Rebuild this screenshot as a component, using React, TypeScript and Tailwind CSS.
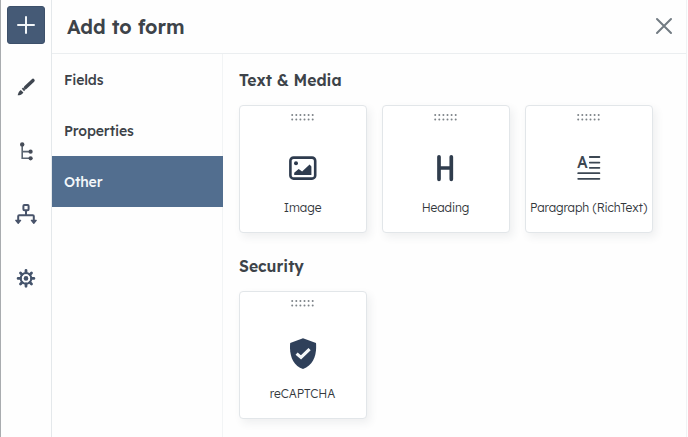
import React, { useState } from 'react';

const TABS = ['Fields', 'Properties', 'Other'];

const BrushIcon = () => (
    <svg className="w-5 h-5" viewBox="0 0 20 20" fill="none" stroke="#3f4650">
        <path d="M17 3.4 L9.5 10.6" strokeWidth="3.4" strokeLinecap="round" />
        <path d="M8.2 11.7 L6.9 13" strokeWidth="3.2" />
        <path d="M4.8 12.9 L7.4 15.4 C6.3 17.4 4 18.2 1.7 18.3 C2.1 16.1 3 13.9 4.8 12.9 Z" fill="#3f4650" stroke="none" />
    </svg>
);

const TreeIcon = () => (
    <svg className="w-5 h-5" viewBox="0 0 20 20" fill="none" stroke="#5a6470" strokeWidth="1.6">
        <path d="M6.2 3 V17.3 H14 M6.2 10.6 H14" />
        <g fill="#464c58" stroke="none">
            <circle cx="6.2" cy="3.4" r="2.2" />
            <circle cx="14.6" cy="10.7" r="2.1" />
            <circle cx="14.6" cy="17.3" r="2.1" />
        </g>
    </svg>
);

const FlowIcon = () => (
    <svg className="w-6 h-6" viewBox="0 0 24 24" fill="none" stroke="#48536a" strokeWidth="2">
        <rect x="9.4" y="3" width="5.2" height="5.2" rx="1" />
        <path d="M12 8.2 V13.2 M4.2 18 V14.2 Q4.2 13.2 5.2 13.2 H18.8 Q19.8 13.2 19.8 14.2 V18" />
        <path d="M1.8 18.3 H6.6 L4.2 21.3 Z M17.4 18.3 H22.2 L19.8 21.3 Z" fill="#48536a" strokeWidth="1.3" strokeLinejoin="round" />
    </svg>
);

const GearIcon = () => (
    <svg className="w-5 h-5" viewBox="0 0 20 20" fill="none" stroke="#44536b">
        <circle cx="10" cy="10.4" r="5.3" strokeWidth="2" />
        <circle cx="10" cy="10.4" r="2.3" fill="#44536b" stroke="none" />
        <path
            d="M10 4.8V2.5M10 16V18.3M4.4 10.4H2.1M15.6 10.4H17.9M6 6.4L4.5 4.9M14 14.4L15.5 15.9M6 14.4L4.5 15.9M14 6.4L15.5 4.9"
            strokeWidth="2.8"
            strokeLinecap="round"
        />
    </svg>
);

const ImageIcon = () => (
    <svg className="w-7 h-6" viewBox="0 0 28 24" fill="none">
        <rect x="1.4" y="1.6" width="24.8" height="21" rx="3.2" stroke="#2e3b4e" strokeWidth="2.6" />
        <circle cx="7" cy="7.2" r="2" fill="#2e3b4e" />
        <path d="M5.2 19 V16.8 L9.7 12.9 L13.1 15.4 L20.6 8.4 L22.4 10.4 V19 Z" fill="#2e3b4e" />
    </svg>
);

const HeadingIcon = () => (
    <svg className="w-8 h-8" viewBox="0 0 32 32" fill="none" stroke="#303d4d" strokeWidth="3.7" strokeLinecap="round">
        <path d="M9 4.8 V27.3 M21.3 4.8 V27.3 M9 16 H21.3" />
    </svg>
);

const ParagraphIcon = () => (
    <svg className="w-6 h-[26px] overflow-visible" viewBox="0 0 24 26" fill="none">
        <text x="0" y="13.4" fontSize="16.5" fontWeight="500" fill="#3c4753" textLength="10.8" lengthAdjust="spacingAndGlyphs">A</text>
        <path d="M12.8 2H22.4M12.8 7.6H22.4M12.8 12.8H22.4M1.2 18.2H22.4M1.2 23.8H22.4" stroke="#3c4753" strokeWidth="1.8" strokeLinecap="round" />
    </svg>
);

const ShieldIcon = () => (
    <svg className="w-[27px] h-8" viewBox="0 0 27 32">
        <path d="M13 .2 L26 5 C27 17 23.3 27.2 13 31 C2.7 27.2 -1 17 .2 5 Z" fill="#2f405a" />
        <path d="M6.6 15.6 L11 19.4 L19.6 11.2" fill="none" stroke="#f5f8fa" strokeWidth="3.2" />
    </svg>
);

const DragDots = () => (
    <svg className="w-6 h-2" viewBox="0 0 24 8" stroke="#7d8388" strokeWidth="2" strokeLinecap="round" strokeDasharray="0 4.1">
        <path d="M1.2 2H22.3M1.2 6.6H22.3" />
    </svg>
);

const Card: React.FC<{ label: string; children: React.ReactNode }> = ({ label, children }) => (
    <button className="w-32 h-32 shrink-0 flex flex-col items-center rounded-[4px] border border-[#e2e6e9] bg-white pt-[7px] shadow-[3px_4px_8px_rgba(45,62,80,0.08)]">
        <DragDots />
        <span className="h-[58px] mt-[18px] flex items-center justify-center">{children}</span>
        <span className="mt-px whitespace-nowrap text-[12px] leading-5 font-light tracking-[-0.08px] text-[#33383d] -ml-px">{label}</span>
    </button>
);

const App: React.FC = () => {
    const [tab, setTab] = useState('Other');

    return (
        <div className="w-[688px] h-[437px] flex overflow-hidden border-l border-[#a9acaf] bg-[#fefefe] font-['Lexend_Deca','Lexend','Inter',sans-serif] text-[#3d4349]">
            <nav className="w-[51px] shrink-0 flex flex-col items-center border-r border-[#e4e8eb] pt-1.5">
                <button className="w-[38px] h-[38px] flex items-center justify-center rounded-[3px] border border-[#3d506a] bg-[#455a76]">
                    <svg className="w-5 h-5" viewBox="0 0 20 20" stroke="#f3f7fa" strokeWidth="2" strokeLinecap="round">
                        <path d="M10 2V18M2 10H18" />
                    </svg>
                </button>
                <div className="mt-[33px] flex flex-col items-center">
                    <BrushIcon />
                    <div className="mt-11"><TreeIcon /></div>
                    <div className="mt-[41px]"><FlowIcon /></div>
                    <div className="mt-[42px]"><GearIcon /></div>
                </div>
            </nav>

            <div className="flex-1 flex flex-col border-r border-[#f0f2f4] mr-px">
                <header className="h-[54px] shrink-0 flex items-center justify-between border-b border-[#ebeef0] pl-[15px] pr-3">
                    <h1 className="text-[19.6px] font-semibold">Add to form</h1>
                    <button aria-label="Close" className="-mt-0.5">
                        <svg className="w-5 h-5" viewBox="0 0 20 20" stroke="#727b82" strokeWidth="2" strokeLinecap="round">
                            <path d="M3 3L17 17M17 3L3 17" />
                        </svg>
                    </button>
                </header>

                <div className="flex flex-1">
                    <div className="w-[171px] shrink-0 border-r border-[#f2f4f5] flex flex-col">
                        {TABS.map(t => (
                            <button
                                key={t}
                                onClick={() => setTab(t)}
                                className={`h-[51px] -mr-px pl-3 pt-px text-left text-[14px] font-medium tracking-[-0.15px] ${tab === t ? 'bg-[#526e8f] text-[#f3f7fa]' : ''}`}
                            >
                                {t}
                            </button>
                        ))}
                    </div>

                    <main className="flex-1 pl-4 pt-[14px]">
                        <h2 className="text-[15.7px] leading-6 font-semibold">Text &amp; Media</h2>
                        <div className="mt-[13px] flex gap-[15px]">
                            <Card label="Image"><ImageIcon /></Card>
                            <Card label="Heading"><HeadingIcon /></Card>
                            <Card label="Paragraph (RichText)"><ParagraphIcon /></Card>
                        </div>
                        <h2 className="mt-[21px] text-[15.7px] leading-6 font-semibold">Security</h2>
                        <div className="mt-[13px] flex">
                            <Card label="reCAPTCHA"><ShieldIcon /></Card>
                        </div>
                    </main>
                </div>
            </div>
        </div>
    );
};

export default App;
